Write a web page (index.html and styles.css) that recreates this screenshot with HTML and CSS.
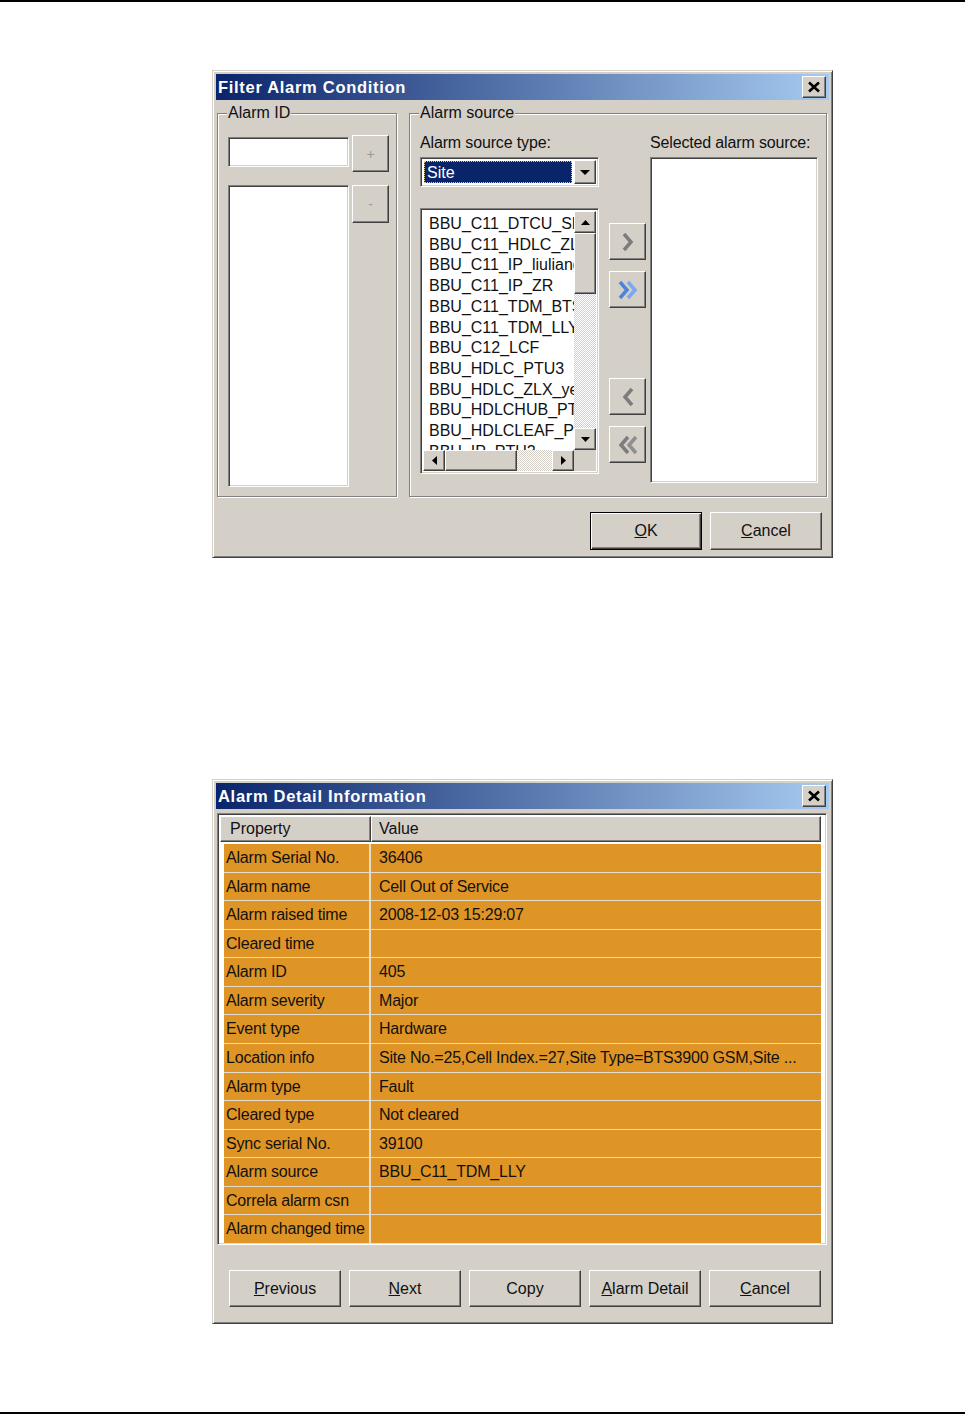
FILE: index.html
```html
<!DOCTYPE html>
<html lang="en">
<head>
    <meta charset="UTF-8">
    <title>Alarm dialogs</title>
    <link rel="stylesheet" href="styles.css">
</head>
<body>
<div class="page">

    <!-- Filter Alarm Condition -->
    <div class="dialog filter">
        <div class="titlebar">
            <span>Filter Alarm Condition</span>
            <div class="close raised">
                <svg width="14" height="12" viewBox="0 0 14 12"><path d="M2 1.5L12 10.5M12 1.5L2 10.5" stroke="#000" stroke-width="2.6"/></svg>
            </div>
        </div>
        <div class="body">
            <div class="groups">
                <div class="group id-group">
                    <div class="legend">Alarm ID</div>
                    <div class="id-row">
                        <div class="sunken id-input"></div>
                        <div class="raised small-btn">+</div>
                    </div>
                    <div class="id-row second">
                        <div class="sunken id-list"></div>
                        <div class="raised small-btn minus">-</div>
                    </div>
                </div>
                <div class="group source-group">
                    <div class="legend">Alarm source</div>
                    <div class="source-cols">
                        <div class="col-a">
                            <div class="label">Alarm source type:</div>
                            <div class="sunken combo">
                                <div class="combo-value">Site</div>
                                <div class="raised combo-btn">
                                    <svg width="10" height="5" viewBox="0 0 10 5"><polygon points="0,0 10,0 5,5" fill="#000"/></svg>
                                </div>
                            </div>
                            <div class="sunken list">
                                <div class="items">
                                    <div>BBU_C11_DTCU_SR</div>
                                    <div>BBU_C11_HDLC_ZLX</div>
                                    <div>BBU_C11_IP_liuliang</div>
                                    <div>BBU_C11_IP_ZR</div>
                                    <div>BBU_C11_TDM_BTS</div>
                                    <div>BBU_C11_TDM_LLY</div>
                                    <div>BBU_C12_LCF</div>
                                    <div>BBU_HDLC_PTU3</div>
                                    <div>BBU_HDLC_ZLX_yes</div>
                                    <div>BBU_HDLCHUB_PTU</div>
                                    <div>BBU_HDLCLEAF_PTU</div>
                                    <div>BBU_IP_PTU2</div>
                                </div>
                                <div class="vscroll">
                                    <div class="raised sb-btn"><svg width="9" height="5" viewBox="0 0 9 5"><polygon points="0,5 9,5 4.5,0" fill="#000"/></svg></div>
                                    <div class="raised vthumb"></div>
                                    <div class="trough"></div>
                                    <div class="raised sb-btn"><svg width="9" height="5" viewBox="0 0 9 5"><polygon points="0,0 9,0 4.5,5" fill="#000"/></svg></div>
                                </div>
                                <div class="hscroll">
                                    <div class="raised sb-btn"><svg width="5" height="9" viewBox="0 0 5 9"><polygon points="5,0 5,9 0,4.5" fill="#000"/></svg></div>
                                    <div class="raised hthumb"></div>
                                    <div class="trough"></div>
                                    <div class="raised sb-btn"><svg width="5" height="9" viewBox="0 0 5 9"><polygon points="0,0 0,9 5,4.5" fill="#000"/></svg></div>
                                </div>
                                <div class="corner"></div>
                            </div>
                        </div>
                        <div class="col-b">
                            <div class="raised move-btn first">
                                <svg width="16" height="22" viewBox="0 0 16 22"><polyline points="4,3 11,11 4,19" fill="none" stroke="#7c7c7c" stroke-width="3.5"/></svg>
                            </div>
                            <div class="raised move-btn">
                                <svg width="24" height="22" viewBox="0 0 24 22"><polyline points="4,3 11,11 4,19" fill="none" stroke="#4f82dc" stroke-width="3.5"/><polyline points="12,3 19,11 12,19" fill="none" stroke="#79a7f2" stroke-width="3.5"/></svg>
                            </div>
                            <div class="raised move-btn third">
                                <svg width="16" height="22" viewBox="0 0 16 22"><polyline points="12,3 5,11 12,19" fill="none" stroke="#7c7c7c" stroke-width="3.5"/></svg>
                            </div>
                            <div class="raised move-btn">
                                <svg width="24" height="22" viewBox="0 0 24 22"><polyline points="12,3 5,11 12,19" fill="none" stroke="#7c7c7c" stroke-width="3.5"/><polyline points="20,3 13,11 20,19" fill="none" stroke="#8e8e8e" stroke-width="3.5"/></svg>
                            </div>
                        </div>
                        <div class="col-c">
                            <div class="label">Selected alarm source:</div>
                            <div class="sunken selected"></div>
                        </div>
                    </div>
                </div>
            </div>
            <div class="actions">
                <div class="btn raised default"><span><u>O</u>K</span></div>
                <div class="btn raised"><span><u>C</u>ancel</span></div>
            </div>
        </div>
    </div>

    <!-- Alarm Detail Information -->
    <div class="dialog detail">
        <div class="titlebar">
            <span>Alarm Detail Information</span>
            <div class="close raised">
                <svg width="14" height="12" viewBox="0 0 14 12"><path d="M2 1.5L12 10.5M12 1.5L2 10.5" stroke="#000" stroke-width="2.6"/></svg>
            </div>
        </div>
        <div class="body">
            <div class="sunken grid-box">
                <div class="grid-head">
                    <div class="hcell prop">Property</div>
                    <div class="hcell val">Value</div>
                </div>
                <div class="grid-rows">
                    <div class="cell prop">Alarm Serial No.</div><div class="cell">36406</div>
                    <div class="cell prop">Alarm name</div><div class="cell">Cell Out of Service</div>
                    <div class="cell prop">Alarm raised time</div><div class="cell">2008-12-03 15:29:07</div>
                    <div class="cell prop">Cleared time</div><div class="cell"></div>
                    <div class="cell prop">Alarm ID</div><div class="cell">405</div>
                    <div class="cell prop">Alarm severity</div><div class="cell">Major</div>
                    <div class="cell prop">Event type</div><div class="cell">Hardware</div>
                    <div class="cell prop">Location info</div><div class="cell">Site No.=25,Cell Index.=27,Site Type=BTS3900 GSM,Site ...</div>
                    <div class="cell prop">Alarm type</div><div class="cell">Fault</div>
                    <div class="cell prop">Cleared type</div><div class="cell">Not cleared</div>
                    <div class="cell prop">Sync serial No.</div><div class="cell">39100</div>
                    <div class="cell prop">Alarm source</div><div class="cell">BBU_C11_TDM_LLY</div>
                    <div class="cell prop">Correla alarm csn</div><div class="cell"></div>
                    <div class="cell prop">Alarm changed time</div><div class="cell"></div>
                </div>
            </div>
            <div class="detail-actions">
                <div class="btn raised"><span><u>P</u>revious</span></div>
                <div class="btn raised"><span><u>N</u>ext</span></div>
                <div class="btn raised"><span>Copy</span></div>
                <div class="btn raised"><span><u>A</u>larm Detail</span></div>
                <div class="btn raised"><span><u>C</u>ancel</span></div>
            </div>
        </div>
    </div>

</div>
</body>
</html>
```

FILE: styles.css
```css
* {
    box-sizing: border-box;
}
body {
    margin: 0;
    background: #fff;
    font-family: "Liberation Sans", Arial, sans-serif;
    font-size: 16px;
    color: #111;
}
.page {
    height: 1414px;
    border-top: 2px solid #000;
    border-bottom: 2px solid #000;
    padding-left: 212px;
    overflow: hidden;
}

/* classic 3d borders */
.raised {
    background: #d4d0c8;
    border: 1px solid;
    border-color: #fff #404040 #404040 #fff;
    box-shadow: inset -1px -1px #808080;
}
.sunken {
    background: #fff;
    border: 1px solid;
    border-color: #808080 #fff #fff #808080;
    box-shadow: inset 1px 1px #404040, inset -1px -1px #d4d0c8;
}

.dialog {
    width: 621px;
    background: #d4d0c8;
    border: 1px solid;
    border-color: #d4d0c8 #404040 #404040 #d4d0c8;
    box-shadow: inset 1px 1px #fff, inset -1px -1px #808080;
    padding: 3px;
    display: flex;
    flex-direction: column;
}
.filter {
    margin-top: 68px;
    height: 488px;
}
.detail {
    margin-top: 221px;
    height: 545px;
}
.titlebar {
    height: 26px;
    flex: none;
    background: linear-gradient(to right, #0a246a, #a6caf0);
    display: flex;
    align-items: center;
    justify-content: space-between;
    padding: 0 3px 0 2px;
    color: #fff;
    font-weight: bold;
    font-size: 16.5px;
    letter-spacing: 0.7px;
}
.close {
    width: 24px;
    height: 22px;
    display: flex;
    align-items: center;
    justify-content: center;
}
.body {
    padding: 0 2px 0 1px;
}

/* filter dialog */
.groups {
    display: flex;
    gap: 12px;
    margin-top: 13px;
}
.group {
    height: 384px;
    border: 1px solid #808080;
    box-shadow: inset 1px 1px #fff, 1px 1px #fff;
}
.id-group {
    width: 180px;
}
.source-group {
    flex: 1;
}
.legend {
    width: fit-content;
    margin: -10px 0 0 9px;
    padding: 0 1px;
    background: #d4d0c8;
    line-height: 18px;
}
.id-row {
    display: flex;
    gap: 3px;
    margin: 13px 0 0 10px;
}
.id-input {
    width: 121px;
    height: 30px;
    margin-top: 2px;
}
.id-list {
    width: 121px;
    height: 302px;
}
.small-btn {
    width: 37px;
    height: 37px;
    display: flex;
    align-items: center;
    justify-content: center;
    color: #9a9a9a;
    font-size: 14px;
}
.minus {
    height: 38px;
}
.source-cols {
    display: flex;
    margin: 12px 0 0 10px;
}
.label {
    line-height: 18px;
    letter-spacing: -0.15px;
    white-space: nowrap;
}
.col-a {
    width: 179px;
}
.combo {
    margin-top: 5px;
    height: 30px;
    display: flex;
    padding: 2px;
}
.combo-value {
    flex: 1;
    margin: 1px 2px 1px 1px;
    background: #0a246a;
    color: #fff;
    outline: 1px dotted #d8cf9a;
    outline-offset: -1px;
    padding-left: 3px;
    line-height: 24px;
}
.combo-btn {
    width: 22px;
    display: flex;
    align-items: center;
    justify-content: center;
}
.list {
    margin-top: 21px;
    height: 266px;
    padding: 2px;
    display: grid;
    grid-template-columns: 1fr 22px;
    grid-template-rows: 1fr 21px;
}
.items {
    overflow: hidden;
    padding: 3px 0 0 6px;
    line-height: 20.7px;
    white-space: nowrap;
}
.vscroll {
    display: flex;
    flex-direction: column;
}
.hscroll {
    display: flex;
}
.sb-btn {
    width: 22px;
    height: 22px;
    flex: none;
    display: flex;
    align-items: center;
    justify-content: center;
}
.hscroll .sb-btn {
    height: 21px;
}
.vthumb {
    height: 61px;
    flex: none;
}
.hthumb {
    width: 72px;
    flex: none;
}
.trough {
    flex: 1;
    background-color: #fff;
    background-image: repeating-conic-gradient(#d4d0c8 0 25%, #fff 0 50%);
    background-size: 2px 2px;
}
.corner {
    background: #d4d0c8;
}
.col-b {
    width: 37px;
    margin-left: 10px;
    display: flex;
    flex-direction: column;
    gap: 11px;
}
.move-btn {
    height: 37px;
    display: flex;
    align-items: center;
    justify-content: center;
}
.move-btn.first {
    margin-top: 89px;
}
.move-btn.third {
    margin-top: 59px;
}
.col-c {
    width: 168px;
    margin-left: 4px;
}
.selected {
    margin-top: 5px;
    height: 326px;
}
.actions {
    display: flex;
    justify-content: flex-end;
    gap: 8px;
    margin-top: 15px;
    padding-right: 5px;
}
.btn {
    width: 112px;
    height: 38px;
    display: flex;
    align-items: center;
    justify-content: center;
    color: #111;
}
.btn.default {
    border: 1px solid #000;
    box-shadow: inset 1px 1px #fff, inset -1px -1px #404040, inset -2px -2px #808080;
}

/* detail dialog */
.grid-box {
    margin-top: 4px;
    height: 432px;
    padding: 2px;
}
.grid-head {
    display: flex;
    height: 26px;
}
.hcell {
    background: #d4d0c8;
    border: 1px solid;
    border-color: #fff #404040 #404040 #fff;
    box-shadow: inset -1px -1px #808080;
    line-height: 23px;
}
.hcell.prop {
    width: 151px;
    padding-left: 9px;
}
.hcell.val {
    width: 450px;
    padding-left: 7px;
}
.grid-rows {
    margin: 2px 3px 0 4px;
    display: grid;
    grid-template-columns: 147px 1fr;
    grid-auto-rows: 28.57px;
    background: #df9426;
}
.cell {
    border-bottom: 1px solid #e6dccb;
    padding-left: 8px;
    line-height: 27px;
    white-space: nowrap;
    overflow: hidden;
    letter-spacing: -0.2px;
}
.cell.prop {
    border-right: 2px solid #e6dccb;
    padding-left: 2px;
}
.detail-actions {
    display: flex;
    gap: 8px;
    margin: 25px 0 0 12px;
}
.detail-actions .btn {
    height: 37px;
}
```
